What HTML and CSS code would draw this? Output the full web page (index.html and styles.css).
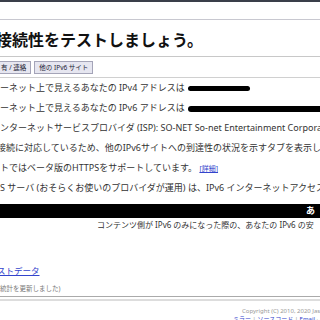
FILE: index.html
```html
<!DOCTYPE html>
<html lang="ja">
<head>
  <meta charset="UTF-8">
  <title>IPv6 接続性をテストしましょう。</title>
  <link rel="stylesheet" href="styles.css">
</head>
<body>

  <div class="topbar"></div>
  <div class="masthead"></div>

  <h1 class="title">接続性をテストしましょう。</h1>

  <div class="tabs">
    <span class="tab tab-cut">有 / 連絡</span>
    <span class="tab">他の IPv6 サイト</span>
  </div>

  <div class="results">
    <div class="row">ーネット上で見えるあなたの IPv4 アドレスは<span class="blot blot-v4"></span></div>
    <div class="row">ーネット上で見えるあなたの IPv6 アドレスは<span class="blot blot-v6"></span></div>
    <div class="row">ンターネットサービスプロバイダ (ISP): SO-NET So-net Entertainment Corpora</div>
    <div class="row row-cut">接続に対応しているため、他のIPv6サイトへの到達性の状況を示すタブを表示し</div>
    <div class="row">トではベータ版のHTTPSをサポートしています。 <a class="more" href="#">[詳細]</a></div>
    <div class="row">S サーバ (おそらくお使いのプロバイダが運用) は、IPv6 インターネットアクセス</div>
  </div>

  <div class="score-bar">あ</div>
  <div class="score-note">コンテンツ側が IPv6 のみになった際の、あなたの IPv6 の安</div>

  <div class="stats">
    <a class="stats-link" href="#">ストデータ</a>
    <div class="stats-note">統計を更新しました)</div>
  </div>

  <div class="footer">
    <div class="copyright">Copyright (C) 2010, 2020 Jason</div>
    <div class="footer-links"><a href="#">ミラー</a> | <a href="#">ソースコード</a> | <a href="#">Email</a> · · <a href="#">簡</a></div>
  </div>

</body>
</html>
```

FILE: styles.css
```css
body {
  margin: 0;
  background: #fff;
  color: #333;
  font-family: "Noto Sans", "Noto Sans CJK JP", sans-serif;
  font-size: 9px;
  white-space: nowrap;
  overflow: hidden;
}
a {
  color: #3344cc;
}
.topbar {
  height: 2px;
  background: #3a3f4a;
}
.masthead {
  height: 17px;
  border-bottom: 1px solid #c8c8d0;
}
.title {
  margin: 0;
  height: 36px;
  line-height: 38px;
  font-size: 16px;
  font-weight: bold;
  color: #111;
  text-indent: -4px;
  font-family: "Noto Sans CJK JP", sans-serif;
  border-bottom: 1px solid #c8c8c8;
}
.tabs {
  display: flex;
  gap: 3px;
  align-items: flex-start;
  height: 21px;
  padding-top: 4px;
  box-sizing: border-box;
  border-bottom: 1px solid #d0d0d0;
}
.tab {
  display: inline-block;
  height: 11px;
  line-height: 11px;
  padding: 0 4px;
  font-size: 6.5px;
  color: #223;
  background: #e6e6f0;
  border: 1px solid #a4a4b8;
}
.tab-cut {
  margin-left: -3px;
  border-left: none;
}
.row {
  height: 20px;
  line-height: 20px;
  overflow: hidden;
}
.row-cut {
  text-indent: -3px;
}
.blot {
  display: inline-block;
  height: 5px;
  margin-left: 3px;
  vertical-align: middle;
  background: #000;
  border-radius: 3px;
}
.blot-v4 {
  width: 62px;
}
.blot-v6 {
  width: 140px;
  height: 6px;
}
.more {
  font-size: 7px;
}
.score-bar {
  margin-top: 6px;
  height: 14px;
  line-height: 14px;
  background: #000;
  color: #fff;
  font-weight: bold;
  padding-left: 306px;
}
.score-note {
  height: 14px;
  line-height: 14px;
  padding-left: 97px;
  font-size: 8px;
}
.stats {
  padding-top: 32px;
}
.stats-link {
  display: block;
  height: 14px;
  line-height: 14px;
  font-size: 8.5px;
  text-indent: -3px;
}
.stats-note {
  height: 19px;
  line-height: 14px;
  padding-top: 4px;
  font-size: 6.5px;
  color: #777;
  box-sizing: border-box;
  border-bottom: 1px solid #aaa;
}
.footer {
  border-top: 2px solid #ddd;
  margin-top: 2px;
  color: #999;
  font-size: 6px;
}
.copyright {
  padding-left: 242px;
  padding-top: 6px;
  line-height: 8px;
}
.footer-links {
  padding-left: 233px;
  line-height: 8px;
}
```
